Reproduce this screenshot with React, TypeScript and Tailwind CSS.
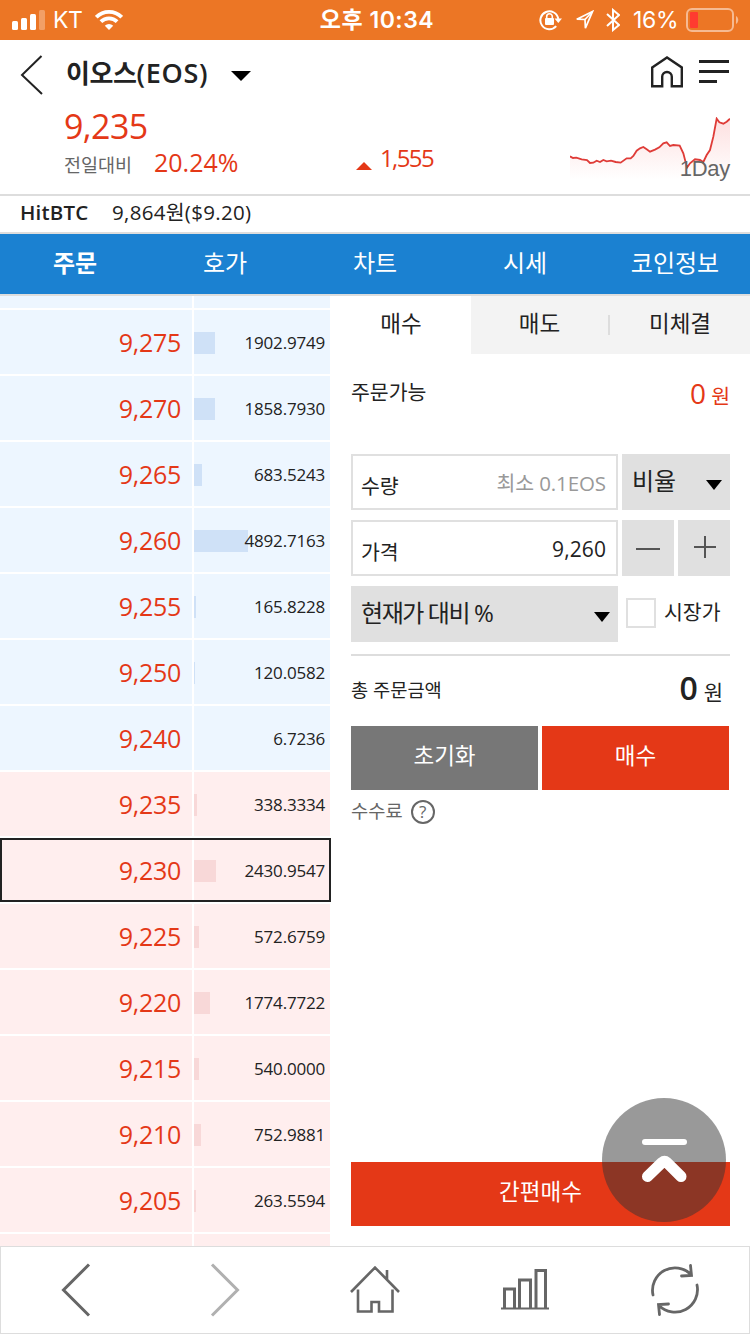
import type { ReactNode } from "react";
import clsx from "clsx";

type Order = { price: string; volume: string; bar: number; side: "ask" | "bid"; current?: boolean };

const orders: Order[] = [
  { price: "9,275", volume: "1902.9749", bar: 21, side: "ask" },
  { price: "9,270", volume: "1858.7930", bar: 21, side: "ask" },
  { price: "9,265", volume: "683.5243", bar: 8, side: "ask" },
  { price: "9,260", volume: "4892.7163", bar: 54, side: "ask" },
  { price: "9,255", volume: "165.8228", bar: 2, side: "ask" },
  { price: "9,250", volume: "120.0582", bar: 1, side: "ask" },
  { price: "9,240", volume: "6.7236", bar: 0, side: "ask" },
  { price: "9,235", volume: "338.3334", bar: 3, side: "bid" },
  { price: "9,230", volume: "2430.9547", bar: 22, side: "bid", current: true },
  { price: "9,225", volume: "572.6759", bar: 5, side: "bid" },
  { price: "9,220", volume: "1774.7722", bar: 16, side: "bid" },
  { price: "9,215", volume: "540.0000", bar: 5, side: "bid" },
  { price: "9,210", volume: "752.9881", bar: 7, side: "bid" },
  { price: "9,205", volume: "263.5594", bar: 2, side: "bid" },
];

const menu = ["주문", "호가", "차트", "시세", "코인정보"];

const chartLine =
  "585,169 594,174 604,173 620,178 636,180 645,189 655,188 665,182 675,186 685,180 695,184 708,182 722,186 737,188 755,175 767,175 775,168 785,152 795,145 805,141 815,148 825,155 840,149 853,142 865,130 875,127 885,138 895,135 914,137 925,160 936,203 945,190 960,178 975,180 985,186 995,165 1005,150 1015,110 1025,56 1033,67 1045,71 1055,65 1065,56";

function StatusBar() {
  return (
    <div className="grid h-10 grid-cols-3 items-center bg-[#ec7625] font-['Inter','Noto_Sans_CJK_KR',sans-serif] text-[23px] leading-10 text-white">
      <div className="flex items-center pl-3">
        <svg width="33" height="20" viewBox="0 0 33 20" fill="#fff">
          <rect x="0" y="11" width="6" height="9" rx="1.5" />
          <rect x="9" y="8" width="6" height="12" rx="1.5" />
          <rect x="18" y="4" width="6" height="16" rx="1.5" />
          <rect x="27" y="0" width="6" height="20" rx="1.5" opacity=".3" />
        </svg>
        <span className="ml-2 tracking-[-0.5px]">KT</span>
        <svg className="ml-[13px]" width="28" height="20" viewBox="0 0 28 20" fill="none" stroke="#fff" strokeWidth="3.8">
          <path d="M1.3 7.2a18 18 0 0 1 25.4 0" />
          <path d="M5.9 11.7a11.5 11.5 0 0 1 16.2 0" />
          <path d="M14 20l-4.2-4.2a6 6 0 0 1 8.4 0z" fill="#fff" stroke="none" />
        </svg>
      </div>
      <div className="pl-1 text-center font-semibold tracking-[0.5px]">오후 10:34</div>
      <div className="flex items-center justify-end pr-[11px]">
        <svg width="24" height="22" viewBox="0 0 24 22" fill="none" stroke="#fff" strokeWidth="2">
          <path d="M17.2 17.2A9 9 0 1 1 19.3 10" />
          <path d="M15.5 9.5h7.5l-3.7 4.5z" fill="#fff" stroke="none" />
          <rect x="6" y="9" width="9" height="7" rx="1" fill="#fff" stroke="none" />
          <path d="M7.7 10V7.5a2.8 2.8 0 0 1 5.6 0V10" strokeWidth="1.6" />
        </svg>
        <svg className="ml-3" width="19" height="20" viewBox="0 0 19 20" fill="none" stroke="#fff" strokeWidth="1.7">
          <path d="M17.5 1.5L1.8 9.2l8.2.3.4 8.6z" />
          <path d="M17 2l-7 7.5" />
        </svg>
        <svg className="ml-3" width="14" height="24" viewBox="0 0 14 24" fill="none" stroke="#fff" strokeWidth="2">
          <path d="M1 6l12 11-6 5V2l6 5L1 18" />
        </svg>
        <span className="ml-[13px] w-[47px] tracking-[-0.3px]">16%</span>
        <svg className="ml-1.5" width="53" height="24" viewBox="0 0 53 24">
          <rect x="1" y="1" width="46" height="22" rx="5" fill="none" stroke="#f6ba92" strokeWidth="2" />
          <rect x="4" y="4" width="8" height="16" rx="1" fill="#ff3b30" />
          <path d="M50 8c3 2 3 6 0 8z" fill="#f6ba92" />
        </svg>
      </div>
    </div>
  );
}

function Summary() {
  return (
    <header className="relative h-[156px] border-b-2 border-[#ddd]">
      <div className="flex h-16 items-center pr-[21px] pl-5">
        <svg className="mt-1.5" width="24" height="40" viewBox="0 0 24 40" fill="none" stroke="#222" strokeWidth="2">
          <path d="M21.5 1L2 20l20 19" />
        </svg>
        <h1 className="mt-0.5 ml-[22px] w-[165px] text-[26px] leading-10 font-semibold tracking-[-0.4px] whitespace-nowrap">
          이오스<span className="text-[27px] tracking-[0.7px]">(EOS)</span>
        </h1>
        <svg className="mt-2" width="20" height="10" viewBox="0 0 20 10">
          <path d="M0 0h20L10 10z" />
        </svg>
        <svg className="ml-auto" width="32" height="32" viewBox="0 0 32 32" fill="none" stroke="#222" strokeWidth="2.4">
          <path d="M1.2 11.5L16 1.5l14.8 10v18.8h-10v-9.5a4.5 4.5 0 0 0-9.6 0v9.5h-10z" />
        </svg>
        <svg className="ml-4" width="30" height="24" viewBox="0 0 30 24" fill="#222">
          <path d="M0 0h30v3H0zM0 10h30v3H0zM0 20h18v3H0z" />
        </svg>
      </div>
      <div className="flex h-[78px] pl-16 text-[#e43817]">
        <div className="w-[292px]">
          <div className="h-11 text-[34px] leading-[44px] tracking-[-0.6px]">9,235</div>
          <div className="flex items-baseline">
            <span className="w-[90px] text-[18.5px] leading-7 text-[#666]">전일대비</span>
            <span className="text-[25px] leading-7">20.24%</span>
          </div>
        </div>
        <div className="flex items-center self-start pt-9 text-[24px] leading-9 tracking-[-1.6px]">
          <svg className="mt-4 mr-2" width="16" height="8" viewBox="0 0 16 8" fill="#e43817">
            <path d="M0 8L8 0l8 8z" />
          </svg>
          1,555
        </div>
        <svg className="mt-[13px] mr-5 ml-auto" width="160" height="63" viewBox="585 51 480 189">
          <defs>
            <linearGradient id="chartFill" x1="0" y1="0" x2="0" y2="1">
              <stop offset="0" stopColor="#fde0e0" />
              <stop offset="1" stopColor="#fff" />
            </linearGradient>
          </defs>
          <polygon points={`${chartLine} 1065,240 585,240`} fill="url(#chartFill)" />
          <polyline points={chartLine} fill="none" stroke="#df3c38" strokeWidth="5.5" />
        </svg>
      </div>
      <span className="absolute right-5 bottom-[11px] font-['Liberation_Sans',sans-serif] text-[22px] leading-7 tracking-[-0.3px] text-[#666]">
        1Day
      </span>
    </header>
  );
}

function OrderRow({ order }: { order: Order }) {
  const ask = order.side === "ask";
  const bg = ask ? "bg-[#edf6ff]" : "bg-[#ffeeee]";
  return (
    <div className={clsx("relative grid h-16 shrink-0 grid-cols-[192px_136px] grid-rows-[64px] gap-0.5", order.current && "z-10")}>
      <div className={clsx("pr-[11px] text-right text-[25px] leading-[64px] tracking-[-0.3px] text-[#e43817]", bg)}>{order.price}</div>
      <div className={clsx("flex items-center pt-0.5", bg)}>
        <div className={clsx("h-[22px]", ask ? "bg-[#cfe1f7]" : "bg-[#f8d8d8]")} style={{ width: order.bar }} />
        <span className="-ml-2 flex-1 pr-[5px] text-right text-[17px] leading-[62px] tracking-[-0.2px]">{order.volume}</span>
      </div>
      {order.current && <div className="absolute inset-y-0 left-0 w-[331px] border-2 border-[#222]" />}
    </div>
  );
}

function OrderBook() {
  return (
    <div className="flex h-[950px] w-[331px] shrink-0 flex-col gap-0.5 overflow-hidden">
      <div className="grid h-3 shrink-0 grid-cols-[192px_136px] gap-0.5">
        <div className="bg-[#edf6ff]" />
        <div className="bg-[#edf6ff]" />
      </div>
      {orders.map((order) => (
        <OrderRow key={order.price} order={order} />
      ))}
      <div className="grid h-3 shrink-0 grid-cols-[192px_136px] gap-0.5">
        <div className="bg-[#ffeeee]" />
        <div className="bg-[#ffeeee]" />
      </div>
    </div>
  );
}

function Field({ label, children }: { label: string; children: ReactNode }) {
  return (
    <div className="flex h-14 w-[267px] items-center justify-between border-2 border-[#e0e0e0] pr-2.5 pl-2 leading-[50px]">
      <span className="pt-2 text-[20.5px]">{label}</span>
      {children}
    </div>
  );
}

function Caret() {
  return (
    <svg className="mt-1.5" width="16" height="10" viewBox="0 0 16 10">
      <path d="M0 0h16L8 10z" />
    </svg>
  );
}

function OrderForm() {
  return (
    <div className="flex h-[950px] flex-1 flex-col">
      <div className="grid h-[58px] grid-cols-[140px_139px_140px] bg-[#f3f3f3] text-center text-[22.5px] leading-[56px]">
        <div className="bg-white">매수</div>
        <div className="flex items-start">
          <span className="flex-1">매도</span>
          <i className="mt-[19px] h-5 w-0.5 bg-[#ddd]" />
        </div>
        <div>미체결</div>
      </div>

      <div className="flex h-[100px] justify-between pt-[18px] pr-5 pl-5">
        <span className="text-[20.5px] leading-10">주문가능</span>
        <span className="text-[28px] leading-[42px] text-[#e43817]">
          0<span className="ml-[5px] text-[20.5px]">원</span>
        </span>
      </div>

      <div className="flex flex-col gap-2.5 pr-5 pl-5">
        <div className="flex gap-1">
          <Field label="수량">
            <span className="pt-0.5 text-[20.5px] tracking-[-0.1px] text-[#999]">최소 0.1EOS</span>
          </Field>
          <div className="flex h-14 w-[108px] items-center justify-between bg-[#e0e0e0] pr-2 pl-2.5 text-[24px] leading-[50px]">
            <span className="pb-0.5">비율</span>
            <Caret />
          </div>
        </div>
        <div className="flex gap-1">
          <Field label="가격">
            <span className="pt-0.5 text-[21px] tracking-[0.1px]">9,260</span>
          </Field>
          <div className="flex h-14 w-[52px] items-center justify-center bg-[#e0e0e0]">
            <i className="mt-0.5 h-0.5 w-6 bg-[#555]" />
          </div>
          <div className="flex h-14 w-[52px] items-center justify-center bg-[#e0e0e0]">
            <svg className="mb-0.5 ml-0.5" width="22" height="22" viewBox="0 0 22 22" fill="#555">
              <path d="M0 10h22v2H0zM10 0h2v22h-2z" />
            </svg>
          </div>
        </div>
        <div className="flex h-14 items-center">
          <div className="flex h-14 w-[267px] items-center justify-between bg-[#e0e0e0] pr-2 pl-2.5 text-[24px] leading-[50px]">
            <span className="pb-0.5 tracking-[-1.4px]">현재가 대비 %</span>
            <Caret />
          </div>
          <div className="mb-0.5 ml-2 h-[30px] w-[30px] border-2 border-[#e0e0e0]" />
          <span className="mb-1 ml-2 text-[20.5px] leading-[50px]">시장가</span>
        </div>
      </div>

      <div className="mt-3 mr-5 ml-5 flex h-[72px] justify-between border-t-2 border-[#ddd] pt-3 pr-[7px]">
        <span className="pt-0.5 text-[18.7px] leading-10">총 주문금액</span>
        <span className="text-[32px] leading-10 font-semibold">
          0<span className="ml-1.5 text-[21px] font-normal">원</span>
        </span>
      </div>
      <div className="mr-[21px] ml-5 grid h-16 grid-cols-2 gap-1 text-center text-[22.5px] leading-[59px] text-white">
        <div className="bg-[#777]">초기화</div>
        <div className="bg-[#e43817]">매수</div>
      </div>
      <div className="flex items-center gap-2 pt-[7px] pl-5 text-[18.7px] leading-7 text-[#666]">
        <span className="pb-0.5">수수료</span>
        <i className="flex h-6 w-6 items-center justify-center rounded-full border-2 border-[#666] text-[17px] leading-5 not-italic">?</i>
      </div>
      <div className="mt-auto mr-5 mb-5 ml-5 h-16 bg-[#e43817] text-center text-[22.5px] leading-[59px] text-white">간편매수</div>
    </div>
  );
}

function Toolbar() {
  return (
    <nav className="grid h-[88px] grid-cols-5 items-center justify-items-center border border-[#ddd] bg-white">
      <svg width="30" height="54" viewBox="0 0 30 54" fill="none" stroke="#666" strokeWidth="3">
        <path d="M28 1.5L2.5 27 28 52.5" />
      </svg>
      <svg width="30" height="54" viewBox="0 0 30 54" fill="none" stroke="#b0b0b0" strokeWidth="3">
        <path d="M2 1.5L27.5 27 2 52.5" />
      </svg>
      <svg width="50" height="50" viewBox="0 0 50 50" fill="none" stroke="#666" strokeWidth="2.6">
        <path d="M1 27L25 2.5 49 27M37 14V5M8 24.5v22h13.500V37h7.500v9.500h13.500v-22" />
      </svg>
      <svg className="mb-0.5" width="48" height="42" viewBox="0 0 48 42" fill="none" stroke="#666" strokeWidth="3">
        <path d="M3.5 40V21h10v19M18.5 40V12h11v28M35 40V2.5h9.5V40" />
        <path d="M0 40.5h48" strokeWidth="2" />
      </svg>
      <svg className="ml-0.5" width="50" height="52" viewBox="0 0 50 52" fill="none" stroke="#666" strokeWidth="2.8" strokeLinecap="round">
        <path d="M3 31A22.5 22.5 0 0 1 41 10.5M40.5 1.5l1 10-10 .5" />
        <path d="M47 21A22.5 22.5 0 0 1 9 41.500M9.500 50.500l-1-10 10-.5" />
      </svg>
    </nav>
  );
}

export default function App() {
  return (
    <div className="relative flex h-[1334px] w-[750px] flex-col overflow-hidden bg-white font-['Open_Sans','Noto_Sans_CJK_KR',sans-serif] text-[#222]">
      <StatusBar />
      <Summary />
      <div className="flex h-[38px] border-b-2 border-[#ddd] pl-5 text-[20.5px] leading-8">
        <span className="w-[92px] font-semibold tracking-[0.2px]">HitBTC</span>
        <span className="tracking-[0.3px]">9,864원($9.20)</span>
      </div>
      <div className="grid h-[62px] grid-cols-5 border-b-2 border-[#ddd] bg-[#1b81d1] text-center text-[24px] leading-[57px] text-white">
        {menu.map((item, i) => (
          <div key={item} className={i === 0 ? "font-bold" : undefined}>
            {item}
          </div>
        ))}
      </div>
      <main className="flex">
        <OrderBook />
        <OrderForm />
      </main>
      <Toolbar />
      <div className="absolute top-[1098px] left-[602px] flex size-[124px] items-center justify-center rounded-full bg-[#333]/50">
        <svg className="mt-0.5" width="46" height="44" viewBox="0 0 46 44" fill="none" stroke="#fff" strokeLinecap="round">
          <path d="M4 3h39" strokeWidth="6" />
          <path d="M6.500 37.500L21 23.500q2.500-2 5 0L40 37.500" strokeWidth="11" />
        </svg>
      </div>
    </div>
  );
}
